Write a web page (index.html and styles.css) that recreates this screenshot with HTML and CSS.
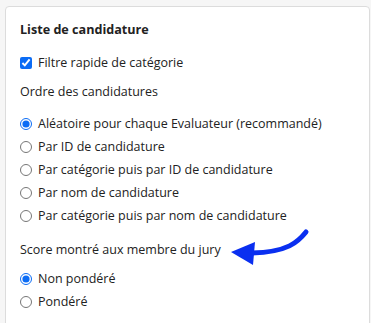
FILE: index.html
```html
<!DOCTYPE html>
<html lang="fr">
<head>
  <meta charset="UTF-8" />
  <title>Liste de candidature</title>
  <link rel="stylesheet" href="styles.css">
</head>
<body>
  <div class="card">
    <h3 class="card-title">Liste de candidature</h3>

    <label class="opt check">
      <input type="checkbox" checked> Filtre rapide de catégorie
    </label>

    <p class="group-label">Ordre des candidatures</p>
    <div class="opts">
      <label class="opt"><input type="radio" name="ordre" checked> Aléatoire pour chaque Evaluateur (recommandé)</label>
      <label class="opt"><input type="radio" name="ordre"> Par ID de candidature</label>
      <label class="opt"><input type="radio" name="ordre"> Par catégorie puis par ID de candidature</label>
      <label class="opt"><input type="radio" name="ordre"> Par nom de candidature</label>
      <label class="opt"><input type="radio" name="ordre"> Par catégorie puis par nom de candidature</label>
    </div>

    <p class="group-label score">Score montré aux membre du jury
      <!-- annotation arrow -->
      <svg class="arrow" width="84" height="42" viewBox="0 0 84 42">
        <path d="M78 5 C70 15 60 25 24 26" fill="none" stroke="#0a2ff0" stroke-width="5" stroke-linecap="round"/>
        <path d="M3 25 L27 15 L25 38 Z" fill="#0a2ff0"/>
      </svg>
    </p>
    <div class="opts">
      <label class="opt"><input type="radio" name="score" checked> Non pondéré</label>
      <label class="opt"><input type="radio" name="score"> Pondéré</label>
    </div>
  </div>
</body>
</html>
```

FILE: styles.css
```css
body {
  margin: 0;
  background: #f6f6f6;
  font-family: "Open Sans", sans-serif;
  color: #222;
  font-size: 12.5px;
  overflow: hidden;
}

.card {
  margin: 6px 1px 0 5px;
  background: #fff;
  border: 1px solid #dcdcdc;
  border-radius: 4px;
  padding: 13px 14px 40px 14px;
  height: 400px;
}

.card-title {
  margin: 0 0 11px;
  font-size: 12.6px;
  font-weight: 700;
  line-height: 20px;
}

.opt {
  display: flex;
  align-items: center;
  height: 23px;
  gap: 6px;
}

.opt input {
  margin: 0;
  width: 12px;
  height: 12px;
  accent-color: #0b6cf5;
}

.check {
  margin-bottom: 8px;
}

.group-label {
  margin: 0 0 10px;
  line-height: 20px;
}

.opts {
  margin-bottom: 10px;
}

.score {
  position: relative;
  margin-top: 13px;
  margin-bottom: 7px;
}

.arrow {
  position: absolute;
  left: 208px;
  top: -13px;
}
```
